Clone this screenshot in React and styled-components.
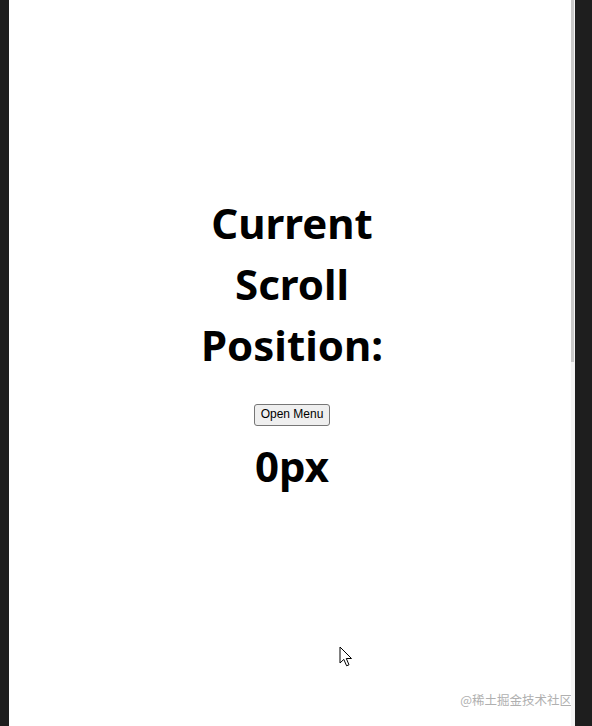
import React from 'react';
import styled, { createGlobalStyle } from 'styled-components';

const GlobalStyle = createGlobalStyle`
  html, body {
    margin: 0;
    padding: 0;
    background: #1e1e1e;
    overflow: hidden;
  }
`;

const App = () => {
    return (
        <>
            <GlobalStyle />
            <Frame>
                <SideBar />
                <Viewport>
                    <Content>
                        <Title>Current Scroll Position:</Title>
                        <MenuButton type="button">Open Menu</MenuButton>
                        <Value>0px</Value>
                    </Content>
                    <Watermark>@稀土掘金技术社区</Watermark>
                    <Pointer width="14" height="22" viewBox="0 0 14 22">
                        <path
                            d="M1 1 L1 17 L4.8 13.4 L7.6 19.8 L10 18.8 L7.3 12.5 L12.5 12.5 Z"
                            fill="#fff"
                            stroke="#000"
                            strokeWidth="1"
                        />
                    </Pointer>
                    <ScrollTrack>
                        <ScrollThumb />
                    </ScrollTrack>
                </Viewport>
                <SideBar $width={17} />
            </Frame>
        </>
    );
};

// Styled components
const Frame = styled.div`
  display: flex;
  width: 592px;
  height: 726px;
  background: #1e1e1e;
`;

const SideBar = styled.div`
  flex: 0 0 ${(p) => p.$width || 9}px;
  background: #1e1e1e;
`;

const Viewport = styled.div`
  position: relative;
  flex: 1;
  background: #fff;
  font-family: "Noto Sans", "Open Sans", sans-serif;
`;

const Content = styled.div`
  display: flex;
  flex-direction: column;
  align-items: center;
  padding-top: 192px;
`;

const Title = styled.h1`
  width: 220px;
  margin: 0;
  font-size: 42px;
  line-height: 61px;
  font-weight: 700;
  text-align: center;
  color: #000;
`;

const MenuButton = styled.button`
  margin-top: 29px;
  padding: 2px 6px 3px;
  font-family: "Liberation Sans", Arial, sans-serif;
  font-size: 12px;
  line-height: 15px;
  color: #000;
  background: #efefef;
  border: 1px solid #767676;
  border-radius: 3px;
`;

const Value = styled.div`
  margin-top: 9px;
  font-size: 42px;
  line-height: 61px;
  font-weight: 700;
  color: #000;
`;

const Watermark = styled.div`
  position: absolute;
  right: 3px;
  bottom: 17px;
  font-family: "Noto Sans CJK SC", sans-serif;
  font-size: 12.5px;
  color: #b0b0b0;
`;

const Pointer = styled.svg`
  position: absolute;
  left: 330px;
  top: 646px;
`;

const ScrollTrack = styled.div`
  position: absolute;
  top: 0;
  right: 0;
  bottom: 0;
  width: 4px;
  background: #f4f4f4;
`;

const ScrollThumb = styled.div`
  width: 3px;
  height: 362px;
  background: #c9c9c9;
`;

export default App;
